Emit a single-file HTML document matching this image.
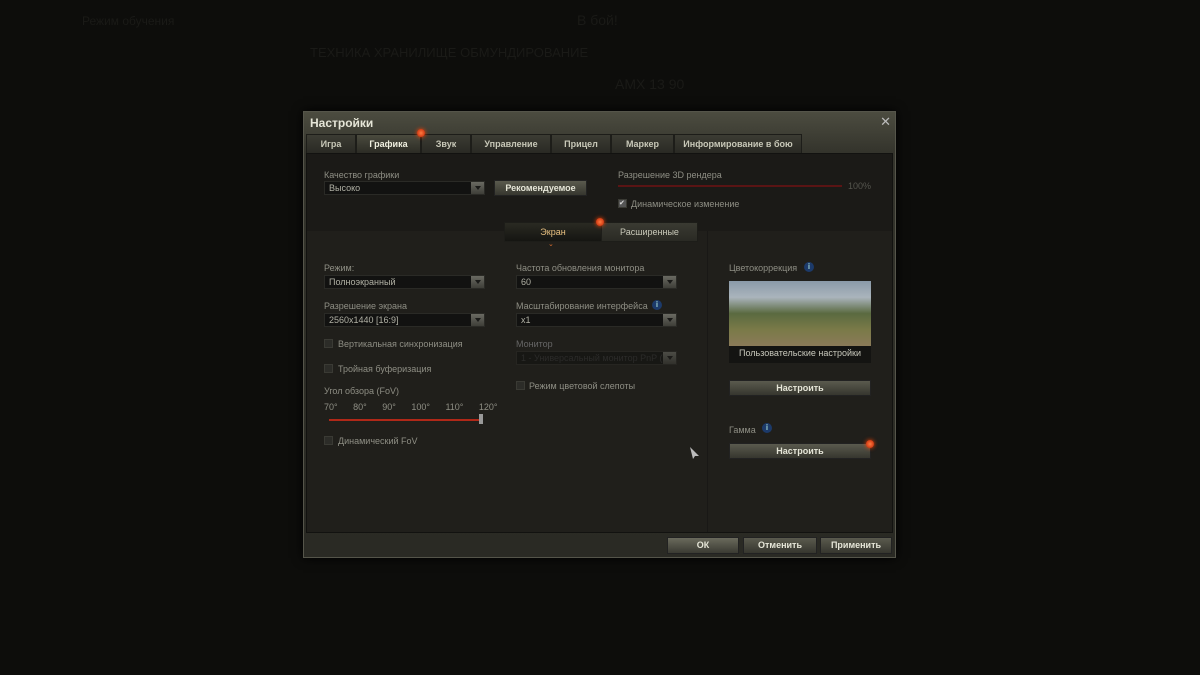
<!DOCTYPE html>
<html><head><meta charset="utf-8"><style>
*{margin:0;padding:0;box-sizing:border-box}
body{width:1200px;height:675px;background:#0d0d0b;font-family:"Liberation Sans","DejaVu Sans",sans-serif;position:relative;overflow:hidden;color:#9a9a8e;font-size:9px}
.a{position:absolute}
.bg{color:#1a1a17;font-size:12px}
#dlg{left:303px;top:111px;width:593px;height:447px;background:linear-gradient(#4c4c40,#34342c 40px,#2a2a24);border:1px solid #55554a;box-shadow:0 0 10px #000}
.title{left:6px;top:4px;color:#e6e6d8;font-size:12px;font-weight:bold}
.tab{top:22px;height:20px;background:linear-gradient(#3c3c33,#2a2a24);border:1px solid #1d1d19;color:#c8c8b8;font-size:9px;font-weight:bold;text-align:center;line-height:18px}
.tab.on{background:linear-gradient(#4a4a3e,#2c2c25);color:#f0f0e0}
#body{left:2px;top:41px;width:587px;height:380px;background:#1b1a17;border:1px solid #121210}
.lbl{color:#8e8e84;font-size:9px}
.sel{height:14px;background:#121211;border:1px solid #2a2a26;color:#b0b0a4;font-size:9px;line-height:12px;padding-left:4px}
.sel:after{content:"";position:absolute;right:0;top:0;width:13px;height:12px;background:linear-gradient(#6a6a62,#3e3e38)}
.sel:before{content:"";position:absolute;right:3px;top:4px;border-left:3.5px solid transparent;border-right:3.5px solid transparent;border-top:4px solid #1a1a18;z-index:2}
.btn{height:16px;background:linear-gradient(#5a5a4e,#36362e);border:1px solid #222;color:#e6e6d8;font-size:9px;font-weight:bold;text-align:center;line-height:14px}
.cb{width:9px;height:9px;background:#2c2c28;border:1px solid #3a3a34}
.dot{width:8px;height:8px;border-radius:50%;background:radial-gradient(#ff7a40,#c02000);box-shadow:0 0 4px #f40}
.info{width:10px;height:10px;border-radius:50%;background:#1c3a6a;color:#9cc;font-size:8px;text-align:center;line-height:10px;font-weight:bold}
</style></head><body>
<div class="a bg" style="left:82px;top:14px">Режим обучения</div>
<div class="a bg" style="left:577px;top:12px;font-size:14px">В бой!</div>
<div class="a bg" style="left:310px;top:45px;font-size:13px">ТЕХНИКА ХРАНИЛИЩЕ ОБМУНДИРОВАНИЕ</div>
<div class="a bg" style="left:615px;top:76px;font-size:14px">AMX 13 90</div>

<div id="dlg" class="a">
<div class="a title">Настройки</div>
<div class="a" style="right:4px;top:2px;color:#bbb;font-size:13px;font-weight:bold">✕</div>
<div class="a tab" style="left:2px;width:50px">Игра</div>
<div class="a tab on" style="left:52px;width:65px">Графика</div>
<div class="a tab" style="left:117px;width:50px">Звук</div>
<div class="a tab" style="left:167px;width:80px">Управление</div>
<div class="a tab" style="left:247px;width:60px">Прицел</div>
<div class="a tab" style="left:307px;width:63px">Маркер</div>
<div class="a tab" style="left:370px;width:128px">Информирование в бою</div>
<div class="a dot" style="left:113px;top:17px"></div>
<div id="body" class="a">
 <div class="a lbl" style="left:17px;top:16px">Качество графики</div>
 <div class="a sel" style="left:17px;top:27px;width:161px">Высоко</div>
 <div class="a btn" style="left:187px;top:26px;width:93px">Рекомендуемое</div>
 <div class="a lbl" style="left:311px;top:16px">Разрешение 3D рендера</div>
 <div class="a" style="left:311px;top:31px;width:224px;height:2px;background:#5a1414"></div>
 <div class="a lbl" style="left:541px;top:27px;color:#55554e">100%</div>
 <div class="a cb" style="left:311px;top:45px;background:#555;color:#ddd;font-size:7px;line-height:7px">✔</div>
 <div class="a lbl" style="left:324px;top:45px">Динамическое изменение</div>
 <div class="a" style="left:0;top:77px;width:585px;height:301px;background:#201f1b"></div>
 <div class="a" style="left:400px;top:77px;width:1px;height:301px;background:#191816"></div>
 <div class="a tab on" style="left:197px;top:68px;width:98px;background:linear-gradient(#2a2a22,#151512);color:#e8c080;font-weight:normal">Экран</div>
 <div class="a tab" style="left:294px;top:68px;width:97px;background:linear-gradient(#3a3a32,#2a2a24);font-weight:normal">Расширенные</div>
 <div class="a dot" style="left:289px;top:64px"></div>
 <div class="a" style="left:241px;top:86px;color:#e07030;font-size:7px">⌄</div>

 <div class="a lbl" style="left:17px;top:109px">Режим:</div>
 <div class="a sel" style="left:17px;top:121px;width:161px">Полноэкранный</div>
 <div class="a lbl" style="left:17px;top:147px">Разрешение экрана</div>
 <div class="a sel" style="left:17px;top:159px;width:161px">2560x1440 [16:9]</div>
 <div class="a cb" style="left:17px;top:185px"></div><div class="a lbl" style="left:31px;top:185px">Вертикальная синхронизация</div>
 <div class="a cb" style="left:17px;top:210px"></div><div class="a lbl" style="left:31px;top:210px">Тройная буферизация</div>
 <div class="a lbl" style="left:17px;top:232px">Угол обзора (FoV)</div>
 <div class="a lbl" style="left:17px;top:248px;word-spacing:13px">70° 80° 90° 100° 110° 120°</div>
 <div class="a" style="left:22px;top:265px;width:152px;height:2px;background:#b02818"></div>
 <div class="a" style="left:172px;top:260px;width:4px;height:10px;background:#999"></div>
 <div class="a cb" style="left:17px;top:282px"></div><div class="a lbl" style="left:31px;top:282px">Динамический FoV</div>

 <div class="a lbl" style="left:209px;top:109px">Частота обновления монитора</div>
 <div class="a sel" style="left:209px;top:121px;width:161px">60</div>
 <div class="a lbl" style="left:209px;top:147px">Масштабирование интерфейса</div>
 <div class="a info" style="left:345px;top:146px">i</div>
 <div class="a sel" style="left:209px;top:159px;width:161px">x1</div>
 <div class="a lbl" style="left:209px;top:185px;color:#666">Монитор</div>
 <div class="a sel" style="left:209px;top:197px;width:161px;color:#333;opacity:.6">1 - Универсальный монитор PnP (</div>
 <div class="a cb" style="left:209px;top:227px"></div><div class="a lbl" style="left:222px;top:227px">Режим цветовой слепоты</div>

 <div class="a lbl" style="left:422px;top:109px">Цветокоррекция</div>
 <div class="a info" style="left:497px;top:108px">i</div>
 <div class="a" style="left:422px;top:127px;width:142px;height:65px;background:linear-gradient(#8a9aa8 0,#aab4bc 25%,#5a6a40 50%,#7a7a48 75%,#8a7a58)"></div>
 <div class="a" style="left:422px;top:192px;width:142px;height:17px;background:#141412;color:#c8c8bc;font-size:9px;text-align:center;line-height:15px">Пользовательские настройки</div>
 <div class="a btn" style="left:422px;top:226px;width:142px">Настроить</div>
 <div class="a lbl" style="left:422px;top:271px">Гамма</div>
 <div class="a info" style="left:455px;top:269px">i</div>
 <div class="a btn" style="left:422px;top:289px;width:142px">Настроить</div>
 <div class="a dot" style="left:559px;top:286px"></div>
 <svg class="a" style="left:382px;top:292px" width="12" height="14"><path d="M1 1 L10 10 L6 10 L4 13 Z" fill="#bbb"/></svg>
</div>
<div class="a btn" style="left:363px;top:425px;width:72px;height:17px;background:linear-gradient(#6a6a5c,#3a3a32)">ОК</div>
<div class="a btn" style="left:439px;top:425px;width:74px;height:17px">Отменить</div>
<div class="a btn" style="left:516px;top:425px;width:72px;height:17px">Применить</div>
</div>
</body></html>
